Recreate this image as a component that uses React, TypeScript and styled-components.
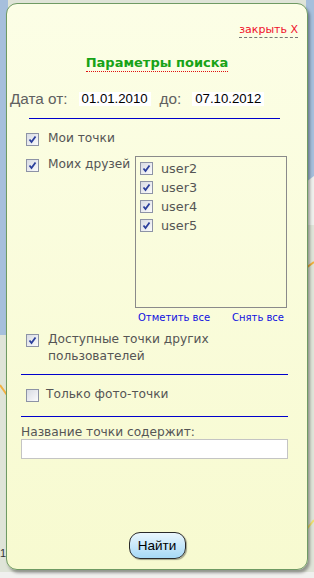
import React from 'react';
import styled, { createGlobalStyle } from 'styled-components';

const GlobalStyle = createGlobalStyle`
  html, body { margin: 0; padding: 0; }
  body { width: 314px; height: 578px; overflow: hidden; }
`;

const Page = styled.div`
  position: relative;
  width: 314px;
  height: 578px;
  background: #dfe4d8;
  overflow: hidden;
  font-family: "DejaVu Sans", Verdana, sans-serif;
`;

const MapLayer = styled.svg`
  position: absolute;
  inset: 0;
`;

const Panel = styled.div`
  position: absolute;
  left: 6px;
  top: 3px;
  width: 300px;
  height: 565px;
  border: 1px solid #6f9a63;
  border-radius: 11px;
  background: linear-gradient(#fcfee6, #f7fad0);
  box-shadow: 2px 3px 3px rgba(0, 0, 0, 0.35);
  display: flex;
  flex-direction: column;
`;

const CloseRow = styled.div`
  display: flex;
  justify-content: flex-end;
  padding: 19px 9px 0 0;
`;

const CloseLink = styled.a`
  color: #f0102a;
  font-size: 11px;
  line-height: 13px;
  border-bottom: 1px dashed #777;
  padding-bottom: 1px;
  cursor: pointer;
`;

const Title = styled.div`
  align-self: center;
  margin-top: 17px;
  color: #17a317;
  font-weight: bold;
  font-size: 13px;
  line-height: 15px;
  border-bottom: 1px dotted #e01010;
  padding-bottom: 1px;
`;

const DateRow = styled.div`
  display: flex;
  align-items: center;
  margin-top: 18px;
  padding-left: 3px;
  font-family: "Liberation Sans", Arial, sans-serif;
  font-size: 15.3px;
  line-height: 18px;
  color: #606060;
`;

const DateValue = styled.span`
  background: #fff;
  color: #000;
  font-size: 13.2px;
  line-height: 14px;
  padding: 0 3px;
  margin: 0 9px 0 11px;
`;

const Divider = styled.div<{ $left: number; $right: number }>`
  height: 1px;
  flex: none;
  background: #0000cc;
  margin: 0 ${(p) => p.$right}px 0 ${(p) => p.$left}px;
`;

const Spacer = styled.div<{ $h: number }>`
  height: ${(p) => p.$h}px;
  flex: none;
`;

const CheckRow = styled.label<{ $gap?: number }>`
  display: flex;
  align-items: flex-start;
  padding-left: 19px;
  font-size: 12.2px;
  line-height: 17px;
  color: #555;
  gap: ${(p) => p.$gap ?? 9}px;
`;

const Box = styled.span`
  flex: none;
  width: 11px;
  height: 11px;
  margin-top: 3px;
  border: 1px solid #8d93a6;
  background: linear-gradient(135deg, #d8dbe3, #fbfbfc);
  display: flex;
  align-items: center;
  justify-content: center;
`;

const FriendsRow = styled.div`
  display: flex;
  align-items: flex-start;
  margin-top: 9px;
`;

const FriendsLabel = styled(CheckRow)`
  width: 109px;
  flex: none;
`;

const FriendsColumn = styled.div`
  display: flex;
  flex-direction: column;
`;

const ListBox = styled.div`
  width: 152px;
  height: 152px;
  border: 1px solid #8a8a8a;
  padding-top: 2px;
  box-sizing: border-box;
  display: flex;
  flex-direction: column;
`;

const UserRow = styled(CheckRow)`
  padding-left: 4px;
  font-size: 12.8px;
  line-height: 19px;
  gap: 8px;
`;

const LinkRow = styled.div`
  display: flex;
  justify-content: space-between;
  padding: 3px 3px 0 3px;
  font-size: 10px;
  line-height: 14px;
`;

const BlueLink = styled.a`
  color: #1010e0;
  cursor: pointer;
`;

const Field = styled.div`
  margin: 8px 19px 0 14px;
  display: flex;
  flex-direction: column;
`;

const FieldLabel = styled.div`
  color: #555;
  font-size: 12.2px;
  line-height: 14px;
`;

const TextInput = styled.input`
  height: 20px;
  box-sizing: border-box;
  border: 1px solid #c4c4c4;
  background: #fff;
  outline: none;
`;

const Footer = styled.div`
  margin-top: auto;
  padding-bottom: 10px;
  display: flex;
  justify-content: center;
`;

const FindButton = styled.button`
  width: 57px;
  height: 27px;
  border: 1px solid #2a2a2a;
  border-radius: 11px;
  background: linear-gradient(#eaf6fd, #a6d9f6);
  box-shadow: 1px 1px 1px rgba(0, 0, 0, 0.35);
  font-family: "Liberation Sans", Arial, sans-serif;
  font-size: 13.5px;
  color: #000;
  padding: 0;
`;

const Check = ({ checked = true }: { checked?: boolean }) => (
  <Box>
    {checked && (
      <svg width="9" height="9" viewBox="0 0 9 9">
        <path d="M1.5 4.5 L3.5 7 L7.5 1.5" fill="none" stroke="#2b3f9c" strokeWidth="1.8" />
      </svg>
    )}
  </Box>
);

const users = ['user2', 'user3', 'user4', 'user5'];

const App: React.FC = () => (
  <Page>
    <GlobalStyle />
    <MapLayer width="314" height="578" viewBox="0 0 314 578">
      <path d="M0 0 H314 V180 L306 182 V0 Z" fill="#a6bfdc" />
      <rect x="0" y="0" width="8" height="335" fill="#a6bfdc" />
      <path d="M306 182 L314 176 V225 H306 Z" fill="#eef0ec" />
      <path d="M0 385 L14 405" stroke="#f0b040" strokeWidth="2" />
      <path d="M306 268 L314 262" stroke="#f0b040" strokeWidth="2" />
      <path d="M306 530 L314 520" stroke="#f0e070" strokeWidth="2" />
      <rect x="0" y="572" width="314" height="6" fill="#f0f0ee" />
      <text x="0" y="557" fontSize="11" fill="#333" fontFamily="Liberation Sans">12</text>
    </MapLayer>
    <Panel>
      <CloseRow>
        <CloseLink>закрыть X</CloseLink>
      </CloseRow>
      <Title>Параметры поиска</Title>
      <DateRow>
        Дата от:<DateValue>01.01.2010</DateValue>до:<DateValue>07.10.2012</DateValue>
      </DateRow>
      <Spacer $h={10} />
      <Divider $left={22} $right={27} />
      <Spacer $h={11} />
      <CheckRow>
        <Check />
        <span>Мои точки</span>
      </CheckRow>
      <FriendsRow>
        <FriendsLabel>
          <Check />
          <span>Моих друзей</span>
        </FriendsLabel>
        <FriendsColumn>
          <ListBox>
            {users.map((u) => (
              <UserRow key={u}>
                <Check />
                <span>{u}</span>
              </UserRow>
            ))}
          </ListBox>
          <LinkRow>
            <BlueLink>Отметить все</BlueLink>
            <BlueLink>Снять все</BlueLink>
          </LinkRow>
        </FriendsColumn>
      </FriendsRow>
      <Spacer $h={6} />
      <CheckRow>
        <Check />
        <span>
          Доступные точки других
          <br />
          пользователей
        </span>
      </CheckRow>
      <Spacer $h={9} />
      <Divider $left={14} $right={19} />
      <Spacer $h={11} />
      <CheckRow $gap={7}>
        <Check checked={false} />
        <span>Только фото-точки</span>
      </CheckRow>
      <Spacer $h={13} />
      <Divider $left={14} $right={19} />
      <Field>
        <FieldLabel>Название точки содержит:</FieldLabel>
        <TextInput />
      </Field>
      <Footer>
        <FindButton>Найти</FindButton>
      </Footer>
    </Panel>
  </Page>
);

export default App;
